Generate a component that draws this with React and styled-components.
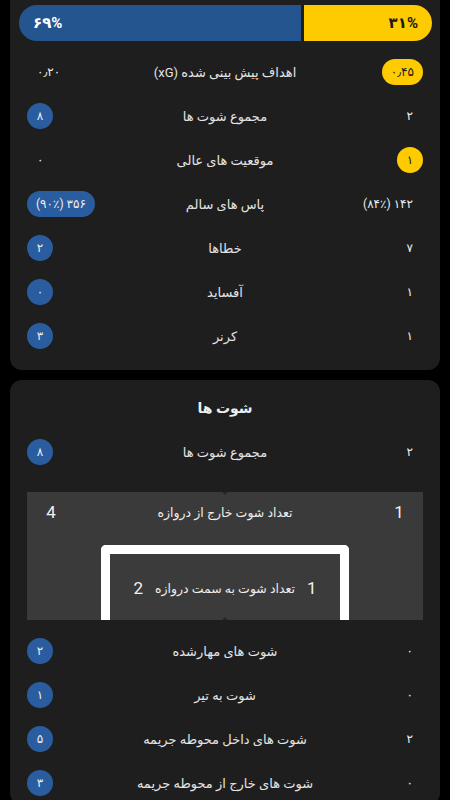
import React from 'react';
import styled, { createGlobalStyle } from 'styled-components';

const GlobalStyle = createGlobalStyle`
  html, body {
    margin: 0;
    padding: 0;
    background: #000;
  }

  body {
    font-family: Roboto, 'DejaVu Sans', sans-serif;
    color: #e6e6e6;
  }
`;

const Page = styled.div`
  display: flex;
  flex-direction: column;
  gap: 10px;
  padding: 0 10px;
  direction: rtl;
`;

const Card = styled.section`
  background: #1e1e1e;
  border-radius: ${({ $flatTop }) => ($flatTop ? '0 0 12px 12px' : '12px')};
  padding: ${({ $flatTop }) => ($flatTop ? '5px 8px 12px 9px' : '16px 17px 0')};
`;

const PossessionBar = styled.div`
  display: flex;
  gap: 3px;
  height: 36px;
  margin-bottom: 9px;
`;

const Segment = styled.div`
  display: flex;
  align-items: center;
  justify-content: ${({ $side }) => ($side === 'home' ? 'flex-start' : 'flex-end')};
  padding: 0 14px;
  background: ${({ $side }) => ($side === 'home' ? '#fecb00' : '#24558f')};
  color: ${({ $side }) => ($side === 'home' ? '#1a1a1a' : '#fff')};
  border-radius: ${({ $side }) => ($side === 'home' ? '0 18px 18px 0' : '18px 0 0 18px')};
  font-size: 15px;
  font-weight: 700;
  box-sizing: border-box;
`;

const Rows = styled.div`
  padding: 0 9px 0 8px;
`;

const Row = styled.div`
  display: grid;
  grid-template-columns: 90px 1fr 90px;
  align-items: center;
  height: 44px;
`;

const Label = styled.div`
  text-align: center;
  font-size: 13px;
  color: #e4e4e4;
`;

const Value = styled.div`
  justify-self: ${({ $end }) => ($end ? 'end' : 'start')};
  display: flex;
  align-items: center;
  justify-content: center;
  min-width: 26px;
  height: 26px;
  box-sizing: border-box;
  border-radius: 13px;
  font-size: 12px;
  background: ${({ $tone }) =>
    $tone === 'home' ? '#fecb00' : $tone === 'away' ? '#2a5da0' : 'transparent'};
  color: ${({ $tone }) => ($tone === 'home' ? '#1a1a1a' : '#eee')};
  padding: ${({ $tone }) => ($tone ? '0 9px' : '0 10px')};
`;

const Heading = styled.h3`
  margin: 0 0 10px;
  height: 24px;
  line-height: 24px;
  text-align: center;
  font-size: 14px;
  font-weight: 700;
  color: #eee;
`;

const GoalArea = styled.div`
  position: relative;
  margin: 18px 0 9px;
  height: 128px;
  background: #3a3a3a;
  overflow: hidden;

  &::before,
  &::after {
    content: '';
    position: absolute;
    left: 50%;
    margin-left: -3px;
    border: 3px solid transparent;
  }

  &::before {
    top: 0;
    border-top-color: #262626;
  }

  &::after {
    bottom: 0;
    border-bottom-color: #262626;
  }
`;

const OuterLine = styled.div`
  display: grid;
  grid-template-columns: 48px 1fr 48px;
  align-items: center;
  height: 40px;
`;

const InnerLine = styled.div`
  display: flex;
  justify-content: center;
  align-items: center;
  gap: 12px;
  height: 52px;
  padding-top: 8px;
`;

const GoalCount = styled.span`
  text-align: center;
  font-family: Roboto, sans-serif;
  font-size: 17px;
  color: #f0f0f0;
`;

const GoalLabel = styled.span`
  text-align: center;
  font-size: 12.5px;
  color: #eee;
`;

const GoalFrame = styled.div`
  width: 230px;
  height: 90px;
  margin: 13px auto 0;
  border: 9px solid #fff;
  border-bottom: none;
  border-radius: 5px 5px 0 0;
  background: #3b3b3b;
`;

const topStats = [
  { label: 'اهداف پیش بینی شده (xG)', home: '۰٫۴۵', away: '۰٫۲۰', lead: 'home' },
  { label: 'مجموع شوت ها', home: '۲', away: '۸', lead: 'away' },
  { label: 'موقعیت های عالی', home: '۱', away: '۰', lead: 'home' },
  { label: 'پاس های سالم', home: '۱۴۲ (۸۴٪)', away: '۳۵۶ (۹۰٪)', lead: 'away' },
  { label: 'خطاها', home: '۷', away: '۲', lead: 'away' },
  { label: 'آفساید', home: '۱', away: '۰', lead: 'away' },
  { label: 'کرنر', home: '۱', away: '۳', lead: 'away' },
];

const shotStats = [
  { label: 'شوت های مهارشده', home: '۰', away: '۲', lead: 'away' },
  { label: 'شوت به تیر', home: '۰', away: '۱', lead: 'away' },
  { label: 'شوت های داخل محوطه جریمه', home: '۲', away: '۵', lead: 'away' },
  { label: 'شوت های خارج از محوطه جریمه', home: '۰', away: '۳', lead: 'away' },
];

const StatRow = ({ stat }) => (
  <Row>
    <Value $tone={stat.lead === 'home' ? 'home' : undefined}>{stat.home}</Value>
    <Label>{stat.label}</Label>
    <Value $end $tone={stat.lead === 'away' ? 'away' : undefined}>
      {stat.away}
    </Value>
  </Row>
);

const App = () => {
  return (
    <>
      <GlobalStyle />
      <Page>
        <Card $flatTop>
          <PossessionBar>
            <Segment $side="home" style={{ width: '31%' }}>۳۱%</Segment>
            <Segment $side="away" style={{ flex: 1 }}>۶۹%</Segment>
          </PossessionBar>
          <Rows>
            {topStats.map((stat) => (
              <StatRow key={stat.label} stat={stat} />
            ))}
          </Rows>
        </Card>

        <Card>
          <Heading>شوت ها</Heading>
          <StatRow stat={{ label: 'مجموع شوت ها', home: '۲', away: '۸', lead: 'away' }} />

          <GoalArea>
            <OuterLine>
              <GoalCount>1</GoalCount>
              <GoalLabel>تعداد شوت خارج از دروازه</GoalLabel>
              <GoalCount>4</GoalCount>
            </OuterLine>
            <GoalFrame>
              <InnerLine>
                <GoalCount>1</GoalCount>
                <GoalLabel>تعداد شوت به سمت دروازه</GoalLabel>
                <GoalCount>2</GoalCount>
              </InnerLine>
            </GoalFrame>
          </GoalArea>

          {shotStats.map((stat) => (
            <StatRow key={stat.label} stat={stat} />
          ))}
        </Card>
      </Page>
    </>
  );
};

export default App;
